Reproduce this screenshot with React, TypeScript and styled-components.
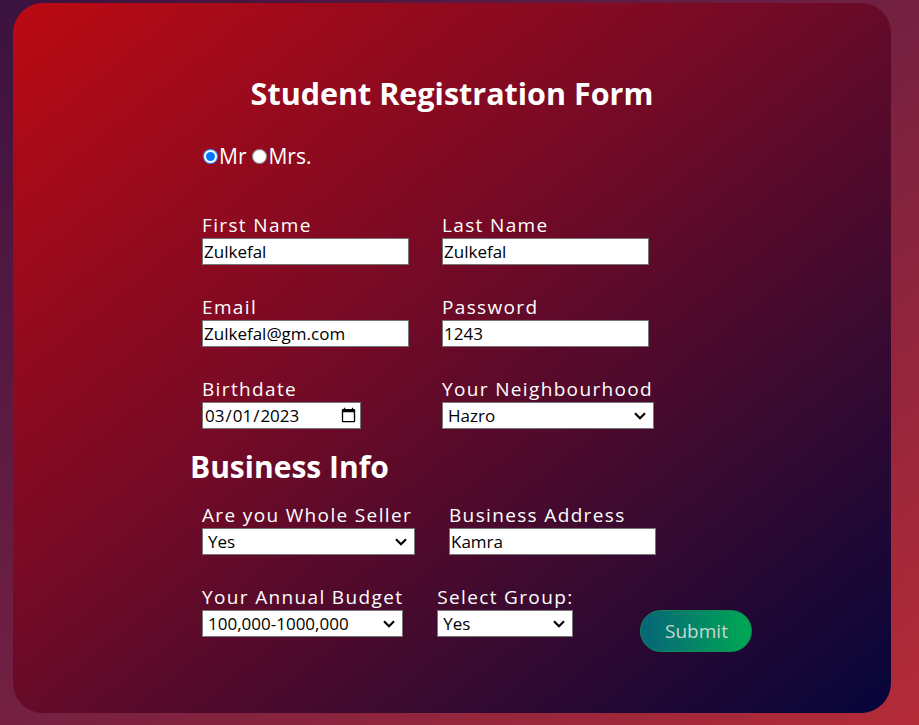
import React from "react";
import styled, { createGlobalStyle } from "styled-components";

const GlobalStyle = createGlobalStyle`
  * { box-sizing: border-box; }
  html, body { margin: 0; padding: 0; }
  body {
    width: 919px;
    height: 725px;
    overflow: hidden;
    font-family: "Open Sans", "Noto Sans", sans-serif;
    background: linear-gradient(to bottom right, #3a1240 0%, #6e1f42 45%, #b52b37 100%);
  }
`;

const Card = styled.div`
  margin: 3px 0 0 13px;
  width: 878px;
  height: 710px;
  border-radius: 30px;
  background: linear-gradient(to bottom right, #bb0a12 0%, #7a0a25 40%, #3a0a30 72%, #05053a 100%);
  padding: 70px 0 0 177px;
  color: #fff;
`;

const Title = styled.h1`
  margin: 0 0 31px -177px;
  font-size: 30.5px;
  line-height: 40px;
  font-weight: 700;
  text-align: center;
`;

const RadioRow = styled.div`
  display: flex;
  align-items: center;
  height: 24px;
  padding-left: 12px;
  font-size: 21px;
  line-height: 24px;
  margin-bottom: 45px;
`;

const Radio = styled.input`
  margin: 0 1px 0 1px;
  width: 15px;
  height: 15px;
  accent-color: #0075ff;
`;

const RadioText = styled.span`
  margin-right: 5px;
`;

const Grid = styled.div`
  display: grid;
  grid-template-columns: 207px auto;
  column-gap: 33px;
  row-gap: 30px;
  padding-left: 12px;
  justify-content: start;
`;

const Field = styled.div`
  display: flex;
  flex-direction: column;
  align-items: flex-start;
`;

const Label = styled.label`
  font-size: 19px;
  line-height: 24px;
  letter-spacing: 1.35px;
  margin-bottom: 1px;
  white-space: nowrap;
`;

const TextInput = styled.input<{ $w?: number }>`
  width: ${(p) => p.$w ?? 207}px;
  height: 27px;
  margin: 0;
  padding: 0 1px;
  border: 1px solid #767676;
  border-radius: 0;
  background: #fff;
  color: #000;
  font-family: "Open Sans", "Noto Sans", sans-serif;
  font-size: 17px;
`;

const SelectWrap = styled.div<{ $w: number }>`
  position: relative;
  width: ${(p) => p.$w}px;
  height: 27px;
`;

const Select = styled.select`
  appearance: none;
  width: 100%;
  height: 100%;
  margin: 0;
  padding: 0 0 0 5px;
  border: 1px solid #767676;
  border-radius: 0;
  background: #fff;
  color: #000;
  font-family: "Open Sans", "Noto Sans", sans-serif;
  font-size: 17px;
`;

const ChevronSvg = styled.svg`
  position: absolute;
  right: 8px;
  top: 10px;
  pointer-events: none;
`;

const Heading = styled.h2`
  margin: 20px 0 18px 0;
  font-size: 30px;
  line-height: 36px;
  font-weight: 700;
`;

const Row = styled.div<{ $mb?: number }>`
  display: flex;
  align-items: flex-start;
  gap: 34px;
  padding-left: 12px;
  margin-bottom: ${(p) => p.$mb ?? 0}px;
`;

const SubmitButton = styled.button`
  margin: 25px 0 0 33px;
  width: 112px;
  height: 42px;
  border-radius: 21px;
  border: 1px solid #118a55;
  background: linear-gradient(to right, #066579 0%, #00a853 100%);
  color: #c9d6cf;
  font-family: "Open Sans", "Noto Sans", sans-serif;
  font-size: 19px;
  padding: 0;
`;

const Dropdown = ({ w, value, options }: { w: number; value: string; options: string[] }) => (
  <SelectWrap $w={w}>
    <Select defaultValue={value}>
      {options.map((o) => (
        <option key={o}>{o}</option>
      ))}
    </Select>
    <ChevronSvg width="12" height="8" viewBox="0 0 12 8">
      <polyline points="1,1.2 6,6.2 11,1.2" fill="none" stroke="#000" strokeWidth="2.2" />
    </ChevronSvg>
  </SelectWrap>
);

export default function App() {
  return (
    <>
      <GlobalStyle />
      <Card>
        <Title>Student Registration Form</Title>
        <RadioRow>
          <Radio type="radio" name="title" defaultChecked />
          <RadioText>Mr</RadioText>
          <Radio type="radio" name="title" />
          <RadioText>Mrs.</RadioText>
        </RadioRow>
        <Grid>
          <Field>
            <Label>First Name</Label>
            <TextInput defaultValue="Zulkefal" />
          </Field>
          <Field>
            <Label>Last Name</Label>
            <TextInput defaultValue="Zulkefal" />
          </Field>
          <Field>
            <Label>Email</Label>
            <TextInput defaultValue="Zulkefal@gm.com" />
          </Field>
          <Field>
            <Label>Password</Label>
            <TextInput defaultValue="1243" />
          </Field>
          <Field>
            <Label>Birthdate</Label>
            <TextInput type="date" $w={159} defaultValue="2023-03-01" />
          </Field>
          <Field>
            <Label>Your Neighbourhood</Label>
            <Dropdown w={212} value="Hazro" options={["Hazro", "Attock", "Kamra"]} />
          </Field>
        </Grid>
        <Heading>Business Info</Heading>
        <Row $mb={30}>
          <Field>
            <Label>Are you Whole Seller</Label>
            <Dropdown w={213} value="Yes" options={["Yes", "No"]} />
          </Field>
          <Field>
            <Label>Business Address</Label>
            <TextInput defaultValue="Kamra" />
          </Field>
        </Row>
        <Row>
          <Field>
            <Label>Your Annual Budget</Label>
            <Dropdown w={201} value="100,000-1000,000" options={["100,000-1000,000", "1000,000+"]} />
          </Field>
          <Field>
            <Label>Select Group:</Label>
            <Dropdown w={136} value="Yes" options={["Yes", "No"]} />
          </Field>
          <SubmitButton type="button">Submit</SubmitButton>
        </Row>
      </Card>
    </>
  );
}
